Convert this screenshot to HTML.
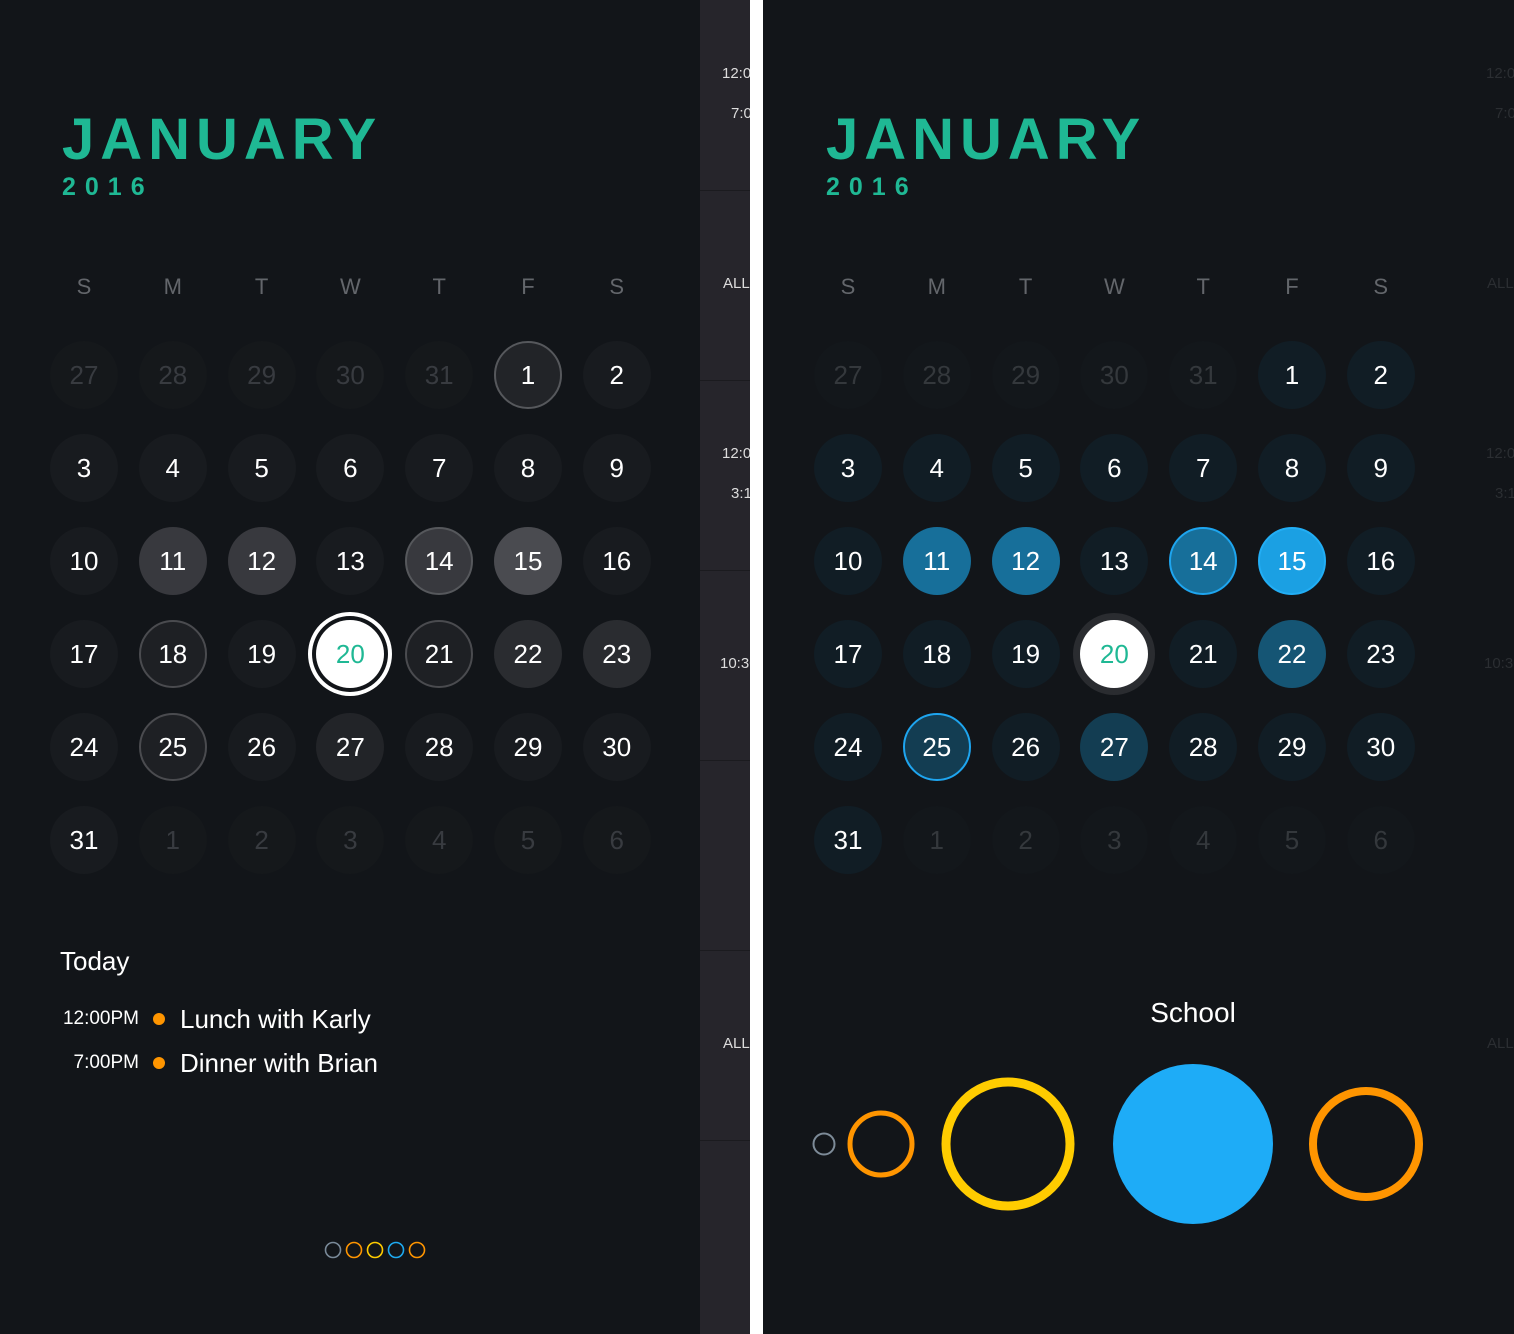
<!DOCTYPE html>
<html><head><meta charset="utf-8"><style>
*{margin:0;padding:0;box-sizing:border-box}
body{width:1514px;height:1334px;background:#121519;position:relative;overflow:hidden;font-family:"Liberation Sans",sans-serif;color:#fff}
.abs{position:absolute}
.title{font-size:58px;font-weight:bold;color:#1fb894;letter-spacing:6px;line-height:58px;top:111px}
.year{font-size:25px;font-weight:bold;color:#1fb894;letter-spacing:9px;line-height:25px;top:175px}
.hdr{display:grid;grid-template-columns:repeat(7,88.8px);top:274px;font-size:22px;color:#63666b;line-height:26px;text-align:center}
.grid{display:grid;grid-template-columns:repeat(7,88.8px);grid-auto-rows:93px;top:328.5px}
.grid div{display:flex;align-items:center;justify-content:center}
.grid span{width:68px;height:68px;border-radius:50%;display:flex;align-items:center;justify-content:center;font-size:26px;background:#181b1f}
.L span.o{background:#15181b;color:#383b40}
.L span.b{background:#222428;border:2px solid #56585c}
.L span.d{background:#38393e}
.L span.db{background:#38393e;border:2px solid #56585c}
.L span.e{background:#4a4b50}
.L span.r{background:#1e2024;border:2px solid #4a4b4f}
.L span.m{background:#2a2c30}
.L span.n{background:#222428}
.L span.t{background:#fff;color:#1fb894;box-shadow:0 0 0 4px #121519,0 0 0 8px #fff}
.R span{background:#111d25}
.R span.o{background:#13171b;color:#34383c}
.R span.d{background:#176f9a}
.R span.db{background:#176f9a;border:2px solid #1ea5ef}
.R span.e{background:#1ba0e3;border:2px solid #22aef5}
.R span.m{background:#155574}
.R span.n{background:#133d52}
.R span.nb{background:#133d52;border:2px solid #1ea5ef}
.R span.t{background:#fff;color:#1fb894;box-shadow:0 0 0 7px #2a2c30}
.strip{left:700px;top:0;width:50px;height:1334px;background:#26252b;overflow:hidden}
.strip i{position:absolute;left:0;width:50px;height:1px;background:#1b1b1f}
.st{position:absolute;font-size:15px;white-space:nowrap;line-height:18px}
</style></head><body>

<div class="abs title" style="left:62px">JANUARY</div>
<div class="abs year" style="left:62px">2016</div>
<div class="abs hdr" style="left:39.6px"><span>S</span><span>M</span><span>T</span><span>W</span><span>T</span><span>F</span><span>S</span></div>
<div class="abs grid L" style="left:39.6px">
<div><span class="o">27</span></div><div><span class="o">28</span></div><div><span class="o">29</span></div><div><span class="o">30</span></div><div><span class="o">31</span></div><div><span class="b">1</span></div><div><span>2</span></div>
<div><span>3</span></div><div><span>4</span></div><div><span>5</span></div><div><span>6</span></div><div><span>7</span></div><div><span>8</span></div><div><span>9</span></div>
<div><span>10</span></div><div><span class="d">11</span></div><div><span class="d">12</span></div><div><span>13</span></div><div><span class="db">14</span></div><div><span class="e">15</span></div><div><span>16</span></div>
<div><span>17</span></div><div><span class="r">18</span></div><div><span>19</span></div><div><span class="t">20</span></div><div><span class="r">21</span></div><div><span class="m">22</span></div><div><span class="m">23</span></div>
<div><span>24</span></div><div><span class="r">25</span></div><div><span>26</span></div><div><span class="n">27</span></div><div><span>28</span></div><div><span>29</span></div><div><span>30</span></div>
<div><span>31</span></div><div><span class="o">1</span></div><div><span class="o">2</span></div><div><span class="o">3</span></div><div><span class="o">4</span></div><div><span class="o">5</span></div><div><span class="o">6</span></div>
</div>

<div class="abs" style="left:60px;top:945px;font-size:26px;line-height:32px">Today</div>
<div class="abs" style="left:40px;top:1008px;width:99px;text-align:right;font-size:19px;line-height:22px">12:00PM</div>
<div class="abs" style="left:153px;top:1013px;width:12px;height:12px;border-radius:50%;background:#ff9500"></div>
<div class="abs" style="left:180px;top:1003px;font-size:26px;line-height:32px">Lunch with Karly</div>
<div class="abs" style="left:40px;top:1052px;width:99px;text-align:right;font-size:19px;line-height:22px">7:00PM</div>
<div class="abs" style="left:153px;top:1057px;width:12px;height:12px;border-radius:50%;background:#ff9500"></div>
<div class="abs" style="left:180px;top:1047px;font-size:26px;line-height:32px">Dinner with Brian</div>

<svg class="abs" style="left:0;top:0" width="700" height="1334">
<g fill="none" stroke-width="1.6">
<circle cx="333" cy="1250" r="7.5" stroke="#7a8a99"/>
<circle cx="354" cy="1250" r="7.5" stroke="#ff9500"/>
<circle cx="375" cy="1250" r="7.5" stroke="#ffcc00"/>
<circle cx="396" cy="1250" r="7.5" stroke="#1eaaf1"/>
<circle cx="417" cy="1250" r="7.5" stroke="#ff9500"/>
</g></svg>

<div class="abs strip">
<i style="top:190px"></i><i style="top:380px"></i><i style="top:570px"></i><i style="top:760px"></i><i style="top:950px"></i><i style="top:1140px"></i>
<span class="st" style="left:22px;top:65px;color:#ddd">12:00</span>
<span class="st" style="left:31px;top:105px;color:#ddd">7:00</span>
<span class="st" style="left:23px;top:275px;color:#ddd">ALL</span>
<span class="st" style="left:22px;top:445px;color:#ddd">12:00</span>
<span class="st" style="left:31px;top:485px;color:#ddd">3:15</span>
<span class="st" style="left:20px;top:655px;color:#ddd">10:30</span>
<span class="st" style="left:23px;top:1035px;color:#ddd">ALL</span>
</div>
<div class="abs" style="left:750px;top:0;width:13px;height:1334px;background:#fff"></div>

<div class="abs" style="left:1464px;top:0;width:50px;height:1334px;overflow:hidden">
<span class="st" style="left:22px;top:65px;color:#2b2e32">12:00</span>
<span class="st" style="left:31px;top:105px;color:#2b2e32">7:00</span>
<span class="st" style="left:23px;top:275px;color:#2b2e32">ALL</span>
<span class="st" style="left:22px;top:445px;color:#2b2e32">12:00</span>
<span class="st" style="left:31px;top:485px;color:#2b2e32">3:15</span>
<span class="st" style="left:20px;top:655px;color:#2b2e32">10:30</span>
<span class="st" style="left:23px;top:1035px;color:#2b2e32">ALL</span>
</div>

<div class="abs title" style="left:826px">JANUARY</div>
<div class="abs year" style="left:826px">2016</div>
<div class="abs hdr" style="left:803.6px"><span>S</span><span>M</span><span>T</span><span>W</span><span>T</span><span>F</span><span>S</span></div>
<div class="abs grid R" style="left:803.6px">
<div><span class="o">27</span></div><div><span class="o">28</span></div><div><span class="o">29</span></div><div><span class="o">30</span></div><div><span class="o">31</span></div><div><span>1</span></div><div><span>2</span></div>
<div><span>3</span></div><div><span>4</span></div><div><span>5</span></div><div><span>6</span></div><div><span>7</span></div><div><span>8</span></div><div><span>9</span></div>
<div><span>10</span></div><div><span class="d">11</span></div><div><span class="d">12</span></div><div><span>13</span></div><div><span class="db">14</span></div><div><span class="e">15</span></div><div><span>16</span></div>
<div><span>17</span></div><div><span>18</span></div><div><span>19</span></div><div><span class="t">20</span></div><div><span>21</span></div><div><span class="m">22</span></div><div><span>23</span></div>
<div><span>24</span></div><div><span class="nb">25</span></div><div><span>26</span></div><div><span class="n">27</span></div><div><span>28</span></div><div><span>29</span></div><div><span>30</span></div>
<div><span>31</span></div><div><span class="o">1</span></div><div><span class="o">2</span></div><div><span class="o">3</span></div><div><span class="o">4</span></div><div><span class="o">5</span></div><div><span class="o">6</span></div>
</div>

<div class="abs" style="left:1093px;top:996px;width:200px;text-align:center;font-size:28px;line-height:34px">School</div>
<svg class="abs" style="left:763px;top:1040px" width="751" height="200">
<g fill="none">
<circle cx="61" cy="104" r="10.5" stroke="#7d8b98" stroke-width="2"/>
<circle cx="118" cy="104" r="31" stroke="#ff9500" stroke-width="5"/>
<circle cx="245" cy="104" r="62" stroke="#ffcc00" stroke-width="9"/>
<circle cx="603" cy="104" r="53" stroke="#ff9500" stroke-width="8"/>
</g>
<circle cx="430" cy="104" r="80" fill="#1eacf7"/>
</svg>
</body></html>
